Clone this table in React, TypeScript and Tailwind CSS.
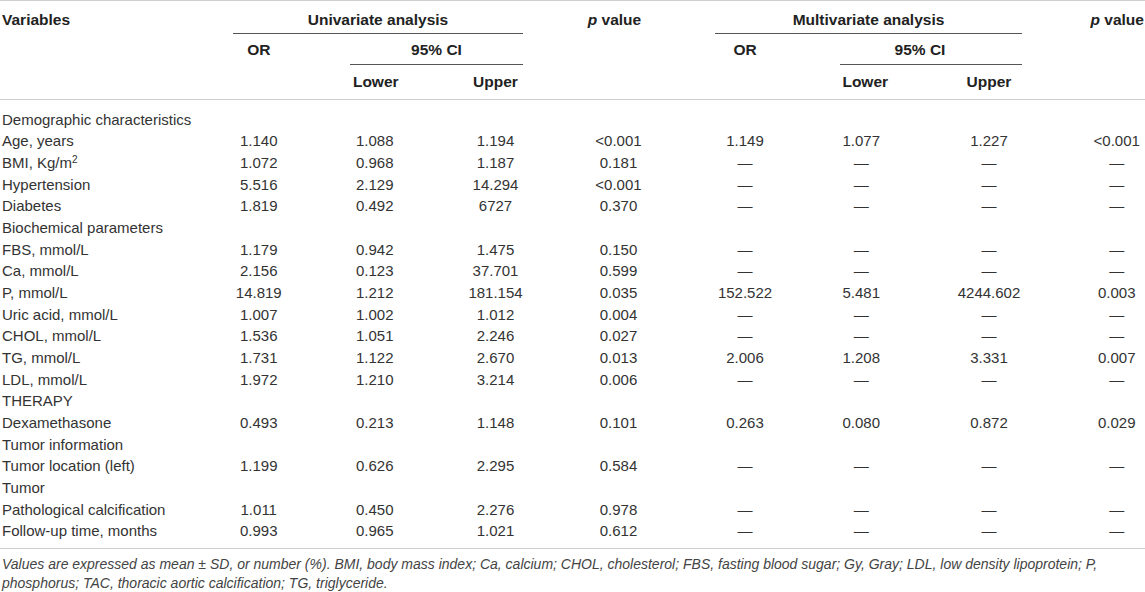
const font = { fontFamily: '"Liberation Sans", Arial, sans-serif' };

const D = '—';

type Row = { label: React.ReactNode; vals?: string[] };

const rows: Row[] = [
  { label: 'Demographic characteristics' },
  { label: 'Age, years', vals: ['1.140', '1.088', '1.194', '<0.001', '1.149', '1.077', '1.227', '<0.001'] },
  {
    label: (
      <>
        BMI, Kg/m<sup className="text-[10px]">2</sup>
      </>
    ),
    vals: ['1.072', '0.968', '1.187', '0.181', D, D, D, D],
  },
  { label: 'Hypertension', vals: ['5.516', '2.129', '14.294', '<0.001', D, D, D, D] },
  { label: 'Diabetes', vals: ['1.819', '0.492', '6727', '0.370', D, D, D, D] },
  { label: 'Biochemical parameters' },
  { label: 'FBS, mmol/L', vals: ['1.179', '0.942', '1.475', '0.150', D, D, D, D] },
  { label: 'Ca, mmol/L', vals: ['2.156', '0.123', '37.701', '0.599', D, D, D, D] },
  { label: 'P, mmol/L', vals: ['14.819', '1.212', '181.154', '0.035', '152.522', '5.481', '4244.602', '0.003'] },
  { label: 'Uric acid, mmol/L', vals: ['1.007', '1.002', '1.012', '0.004', D, D, D, D] },
  { label: 'CHOL, mmol/L', vals: ['1.536', '1.051', '2.246', '0.027', D, D, D, D] },
  { label: 'TG, mmol/L', vals: ['1.731', '1.122', '2.670', '0.013', '2.006', '1.208', '3.331', '0.007'] },
  { label: 'LDL, mmol/L', vals: ['1.972', '1.210', '3.214', '0.006', D, D, D, D] },
  { label: 'THERAPY' },
  { label: 'Dexamethasone', vals: ['0.493', '0.213', '1.148', '0.101', '0.263', '0.080', '0.872', '0.029'] },
  { label: 'Tumor information' },
  { label: 'Tumor location (left)', vals: ['1.199', '0.626', '2.295', '0.584', D, D, D, D] },
  { label: 'Tumor' },
  { label: 'Pathological calcification', vals: ['1.011', '0.450', '2.276', '0.978', D, D, D, D] },
  { label: 'Follow-up time, months', vals: ['0.993', '0.965', '1.021', '0.612', D, D, D, D] },
];

// centre shifts so every column lines up with the printed table
const colCls = [
  'pr-[32px] text-center',
  'pr-[2px] text-center',
  'text-center',
  'text-center',
  'pl-[6px] text-center',
  'pr-[6px] text-center',
  'text-center',
  'pl-[36px] text-center',
];

const grid = 'grid grid-cols-[233px_83.5px_118.5px_121px_125px_122px_122.5px_127px_92.5px]';

const Header = () => (
  <div className={`${grid} border-b border-[#cfcfcf] font-bold text-[15.5px] text-[#222] leading-[20px]`}>
    {/* row 1 */}
    <div className="col-start-1 row-start-1 pl-[2px] pt-[9px]">Variables</div>
    <div className="col-start-2 col-span-3 row-start-1 mr-[33px] pt-[9px] pb-[3px] border-b border-[#555] text-center">
      Univariate analysis
    </div>
    <div className="col-start-5 row-start-1 pt-[9px] text-center pr-[8px]">
      <i>p</i> value
    </div>
    <div className="col-start-6 col-span-3 row-start-1 ml-[34px] mr-[30.5px] pt-[9px] pb-[3px] border-b border-[#555] text-center">
      Multivariate analysis
    </div>
    <div className="col-start-9 row-start-1 pt-[9px] pl-[38px] whitespace-nowrap">
      <i>p</i> value
    </div>

    {/* row 2 */}
    <div className="col-start-2 row-start-2 pt-[6px] pr-[32px] text-center">OR</div>
    <div className="col-start-3 col-span-2 row-start-2 ml-[33.5px] mr-[33px] pt-[6px] pb-[4px] border-b border-[#555] text-center">
      95% CI
    </div>
    <div className="col-start-6 row-start-2 pt-[6px] pl-[6px] text-center">OR</div>
    <div className="col-start-7 col-span-2 row-start-2 ml-[37px] mr-[30.5px] pt-[6px] pb-[4px] pr-[22px] border-b border-[#555] text-center">
      95% CI
    </div>

    {/* row 3 */}
    <div className="col-start-3 row-start-3 pt-[7px] pb-[7px] text-center">Lower</div>
    <div className="col-start-4 row-start-3 pt-[7px] pb-[7px] text-center">Upper</div>
    <div className="col-start-7 row-start-3 pt-[7px] pb-[7px] pl-[2px] text-center">Lower</div>
    <div className="col-start-8 row-start-3 pt-[7px] pb-[7px] text-center">Upper</div>
  </div>
);

export default function App() {
  return (
    <div className="w-[1145px] h-[592px] overflow-hidden bg-white" style={font}>
      <div className="border-t border-[#cfcfcf]">
        <Header />
        <div className="pt-[8.5px] pb-[6px] border-b border-[#cfcfcf] text-[15px] leading-[21.67px] text-[#333]">
          {rows.map((r, i) => (
            <div key={i} className={grid}>
              <div className="pl-[2px] whitespace-nowrap">{r.label}</div>
              {r.vals?.map((v, j) => (
                <div key={j} className={colCls[j]}>
                  {v}
                </div>
              ))}
            </div>
          ))}
        </div>
        <div className="pt-[6px] pl-[2px] italic text-[14px] leading-[19px] text-[#444]">
          Values are expressed as mean ± SD, or number (%). BMI, body mass index; Ca, calcium; CHOL, cholesterol; FBS,
          fasting blood sugar; Gy, Gray; LDL, low density lipoprotein; P,
          <br />
          phosphorus; TAC, thoracic aortic calcification; TG, triglyceride.
        </div>
      </div>
    </div>
  );
}
